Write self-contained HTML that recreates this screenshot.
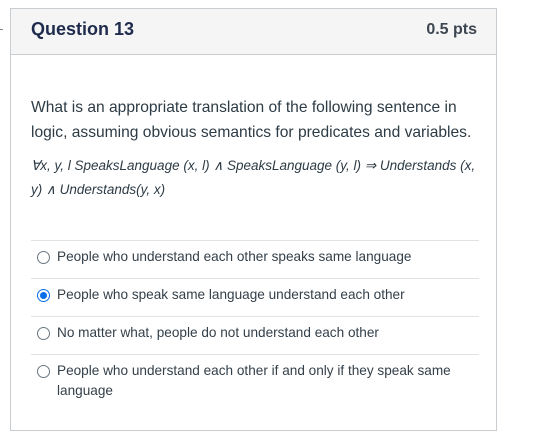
<!DOCTYPE html>
<html><head><style>
body{margin:0;width:554px;height:444px;background:#fff;font-family:"Liberation Sans",sans-serif;color:#2d3b45;position:relative;overflow:hidden}
.box{position:absolute;left:10px;top:8px;width:487px;height:423px;border:1px solid #c7cdd1;box-sizing:border-box}
.hdr{position:absolute;left:0;top:0;right:0;height:45px;background:#f5f5f5;border-bottom:1px solid #c7cdd1}
.t{position:absolute;left:20px;top:10px;font-size:18px;font-weight:bold;color:#1f2b4d}
.p{position:absolute;right:19px;top:12px;font-size:16px;font-weight:bold;color:#3d4650}
.q{position:absolute;left:20px;top:86px;white-space:nowrap;font-size:15.6px;line-height:25px}
.f{position:absolute;left:20px;top:145px;white-space:nowrap;font-size:13.5px;line-height:24px;font-style:italic}
.sep{position:absolute;left:20px;width:448px;height:1px;background:#dfe3e5}
.a{position:absolute;left:46px;font-size:13.6px;line-height:20px;color:#333f49}
.r{position:absolute;left:26px;width:13px;height:13px;border:1px solid #6b7780;border-radius:50%;box-sizing:border-box}
.r.on{border:1px solid #0a6ce8;background:#fff}
.r.on::after{content:"";position:absolute;left:2px;top:2px;width:7px;height:7px;border-radius:50%;background:#0a6ce8}
</style></head><body>
<div style="position:absolute;left:0;top:29px;width:3px;height:1px;background:#888"></div>
<div class="box">
<div class="hdr"><div class="t">Question 13</div><div class="p">0.5 pts</div></div>
<div class="q">What is an appropriate translation of the following sentence in<br>logic, assuming obvious semantics for predicates and variables.</div>
<div class="f">∀x, y, l SpeaksLanguage (x, l) ∧ SpeaksLanguage (y, l) ⇒ Understands (x,<br>y) ∧ Understands(y, x)</div>
<div class="sep" style="top:231px"></div>
<div class="r" style="top:242px"></div><div class="a" style="top:238px">People who understand each other speaks same language</div>
<div class="sep" style="top:269px"></div>
<div class="r on" style="top:280px"></div><div class="a" style="top:276px">People who speak same language understand each other</div>
<div class="sep" style="top:307px"></div>
<div class="r" style="top:318px"></div><div class="a" style="top:314px">No matter what, people do not understand each other</div>
<div class="sep" style="top:345px"></div>
<div class="r" style="top:356px"></div><div class="a" style="top:352px">People who understand each other if and only if they speak same<br>language</div>
</div>
</body></html>
